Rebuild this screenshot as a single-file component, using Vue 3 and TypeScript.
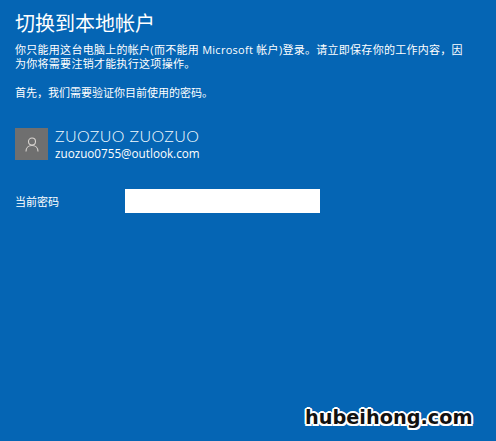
<script setup lang="ts">
const title = '切换到本地帐户'
const line1 = '你只能用这台电脑上的帐户(而不能用 Microsoft 帐户)登录。请立即保存你的工作内容，因'
const line2 = '为你将需要注销才能执行这项操作。'
const line3 = '首先，我们需要验证你目前使用的密码。'
</script>

<template>
  <main class="page">
    <h1 class="title">{{ title }}</h1>
    <p class="desc wide">{{ line1 }}<br />{{ line2 }}</p>
    <p class="desc verify">{{ line3 }}</p>
    <section class="user">
      <div class="avatar">
        <svg width="14" height="15" viewBox="0 0 14 15" fill="none" stroke="#d8d4d0" stroke-width="1.1">
          <circle cx="7" cy="4.500" r="3.500" />
          <path d="M1 14.500c0-3.500 2.500-6 6-6s6 2.500 6 6" />
        </svg>
      </div>
      <div class="info">
        <div class="name">ZUOZUO ZUOZUO</div>
        <div class="email">zuozuo0755@outlook.com</div>
      </div>
    </section>
    <div class="field">
      <label class="label" for="pw">当前密码</label>
      <input id="pw" class="input" type="password" />
    </div>
    <div class="mark">hubeihong.com</div>
  </main>
</template>

<style>
html, body { margin: 0; padding: 0; }
</style>

<style scoped>
.page {
  position: relative;
  box-sizing: border-box;
  width: 496px;
  height: 441px;
  overflow: hidden;
  padding: 10px 15px 0;
  background: #0565b4;
  color: #fff;
  font-family: "Liberation Sans", "Noto Sans CJK SC", sans-serif;
}
.title {
  margin: 0;
  font-family: "Noto Sans CJK SC", sans-serif;
  font-size: 20px;
  font-weight: 400;
  line-height: 26px;
}
.desc {
  margin: 7px 0 0;
  font-family: "Open Sans", "Noto Sans CJK SC", sans-serif;
  font-size: 11px;
  line-height: 14px;
  white-space: nowrap;
}
.wide { letter-spacing: 0.28px; }
.verify { margin-top: 15px; }
.user {
  display: flex;
  align-items: center;
  gap: 7px;
  margin-top: 26px;
}
.avatar {
  display: flex;
  align-items: center;
  justify-content: center;
  width: 33px;
  height: 32px;
  background: #6f6f6f;
}
.name {
  font-family: Lato, sans-serif;
  font-weight: 300;
  font-size: 16px;
  line-height: 19px;
  letter-spacing: 0.4px;
  color: #f2fbff;
}
.email {
  font-family: "Open Sans", sans-serif;
  font-size: 11.700px;
  line-height: 17px;
}
.field {
  display: flex;
  align-items: center;
  margin-top: 27px;
}
.label {
  width: 110px;
  font-family: "Noto Sans CJK SC", sans-serif;
  font-size: 11px;
}
.input {
  box-sizing: border-box;
  width: 195px;
  height: 24px;
  border: 0;
  padding: 0;
  background: #fff;
}
.mark {
  position: absolute;
  left: 305px;
  top: 404px;
  font-family: "DejaVu Sans", sans-serif;
  font-weight: 700;
  font-size: 19.300px;
  line-height: 28px;
  color: #111;
  text-shadow: 2px 0 0 #fff, -2px 0 0 #fff, 0 2px 0 #fff, 0 -2px 0 #fff, 1.500px 1.500px 0 #fff, -1.500px 1.500px 0 #fff, 1.500px -1.500px 0 #fff, -1.500px -1.500px 0 #fff;
}
</style>
